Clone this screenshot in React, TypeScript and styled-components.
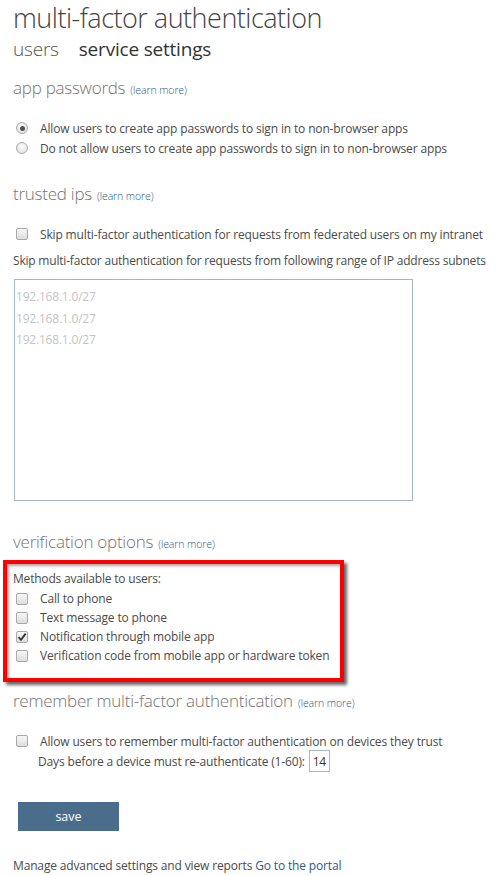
import React from "react";
import styled, { createGlobalStyle } from "styled-components";

const Global = createGlobalStyle`
  html, body { margin: 0; padding: 0; background: #fff; }
  body { font-family: "Open Sans", "Noto Sans", "Liberation Sans", sans-serif; color: #444; }
`;

const Page = styled.div`
  display: flex;
  flex-direction: column;
  padding: 0 0 0 13px;
  width: 485px;
`;

const Title = styled.h1`
  margin: 0;
  font-size: 27px;
  line-height: 36px;
  font-weight: 300;
  color: #444;
  letter-spacing: -0.5px;
`;

const Tabs = styled.div`
  display: flex;
  gap: 20px;
  margin-top: 0;
`;

const Tab = styled.span<{ $active?: boolean }>`
  font-size: 19px;
  line-height: 26px;
  font-weight: ${(p) => (p.$active ? 400 : 300)};
  color: ${(p) => (p.$active ? "#333" : "#555")};
  letter-spacing: -0.2px;
`;

const SectionHead = styled.h2<{ $top: number }>`
  margin: ${(p) => p.$top}px 0 0 0;
  font-size: 17px;
  line-height: 24px;
  font-weight: 300;
  color: #737373;
  letter-spacing: -0.25px;
`;

const Learn = styled.a`
  font-size: 10.5px;
  color: #2b5a8c;
  text-decoration: none;
  margin-left: 5px;
  letter-spacing: -0.1px;
`;

const Options = styled.div<{ $top: number; $gap?: number }>`
  display: flex;
  flex-direction: column;
  gap: ${(p) => p.$gap ?? 0}px;
  margin-top: ${(p) => p.$top}px;
`;

const Row = styled.label<{ $h?: number }>`
  display: flex;
  align-items: center;
  height: ${(p) => p.$h ?? 20}px;
  padding-left: 3px;
  font-size: 12px;
  color: #4a4a4a;
  letter-spacing: -0.15px;
`;

const Mark = styled.span`
  width: 24px;
  display: flex;
  align-items: center;
  flex: none;
`;

const RadioDot = styled.span<{ $on?: boolean }>`
  width: 12px;
  height: 12px;
  border-radius: 50%;
  border: 1px solid #a9a9a9;
  background: radial-gradient(circle at 50% 35%, #fdfdfd, #dcdcdc);
  display: flex;
  align-items: center;
  justify-content: center;
  box-sizing: border-box;
  &::after {
    content: "";
    display: ${(p) => (p.$on ? "block" : "none")};
    width: 5px;
    height: 5px;
    border-radius: 50%;
    background: #505050;
  }
`;

const Box = styled.span`
  width: 12px;
  height: 12px;
  border-radius: 2px;
  border: 1px solid #a8a8a8;
  background: linear-gradient(#f6f6f6, #dedede);
  box-sizing: border-box;
  display: flex;
  align-items: center;
  justify-content: center;
`;

const Plain = styled.div<{ $top: number }>`
  margin-top: ${(p) => p.$top}px;
  font-size: 12px;
  line-height: 20px;
  color: #4a4a4a;
  letter-spacing: -0.2px;
`;

const IpArea = styled.div`
  margin-top: 8px;
  margin-left: 1px;
  width: 399px;
  height: 222px;
  border: 1px solid #a3b5c8;
  box-sizing: border-box;
  padding: 6px 0 0 1px;
  display: flex;
  flex-direction: column;
`;

const IpLine = styled.div`
  font-size: 12px;
  line-height: 21.5px;
  color: #c4c4c4;
  letter-spacing: -0.2px;
`;

const Highlight = styled.div`
  margin: 4px 0 0 -10px;
  width: 341px;
  height: 122px;
  box-sizing: border-box;
  border: 4px solid #f00;
  box-shadow: 3px 3px 3px rgba(0, 0, 0, 0.6), inset 2px 2px 3px rgba(0, 0, 0, 0.35);
  padding: 5px 0 0 6px;
  display: flex;
  flex-direction: column;
`;

const HLRow = styled(Row)`
  padding-left: 3px;
`;

const Days = styled.div`
  display: flex;
  align-items: center;
  gap: 4px;
  margin: -1px 0 0 25px;
  font-size: 12px;
  color: #4a4a4a;
  letter-spacing: -0.15px;
  height: 22px;
`;

const DayInput = styled.span`
  width: 21px;
  height: 22px;
  box-sizing: border-box;
  border: 1px solid #a3b5c8;
  display: flex;
  align-items: center;
  justify-content: center;
  font-size: 12px;
  color: #333;
`;

const SaveButton = styled.button`
  margin: 30px 0 0 5px;
  width: 101px;
  height: 29px;
  background: #4a6d8c;
  color: #fff;
  border: none;
  font-family: inherit;
  font-size: 12.5px;
  padding: 0;
  align-self: flex-start;
`;

const Footer = styled.div`
  margin-top: 25px;
  font-size: 12px;
  line-height: 20px;
  color: #4a4a4a;
  letter-spacing: -0.15px;
`;

const FooterLink = styled.a`
  color: #2b5a8c;
  text-decoration: none;
`;

const Check = () => (
  <svg width="10" height="10" viewBox="0 0 10 10">
    <path d="M1.5 5.2 L4 7.8 L8.6 1.6" fill="none" stroke="#333" strokeWidth="1.8" />
  </svg>
);

const CheckBox = ({ on }: { on?: boolean }) => (
  <Mark>
    <Box>{on && <Check />}</Box>
  </Mark>
);

const Radio = ({ on }: { on?: boolean }) => (
  <Mark>
    <RadioDot $on={on} />
  </Mark>
);

export default function App() {
  return (
    <>
      <Global />
      <Page>
        <Title>multi-factor authentication</Title>
        <Tabs>
          <Tab>users</Tab>
          <Tab $active>service settings</Tab>
        </Tabs>

        <SectionHead $top={14}>
          app passwords<Learn>(learn more)</Learn>
        </SectionHead>
        <Options $top={16}>
          <Row>
            <Radio on />
            Allow users to create app passwords to sign in to non-browser apps
          </Row>
          <Row>
            <Radio />
            Do not allow users to create app passwords to sign in to non-browser apps
          </Row>
        </Options>

        <SectionHead $top={24}>
          trusted ips<Learn>(learn more)</Learn>
        </SectionHead>
        <Options $top={15}>
          <Row $h={22}>
            <CheckBox />
            Skip multi-factor authentication for requests from federated users on my intranet
          </Row>
        </Options>
        <Plain $top={6}>Skip multi-factor authentication for requests from following range of IP address subnets</Plain>
        <IpArea>
          <IpLine>192.168.1.0/27</IpLine>
          <IpLine>192.168.1.0/27</IpLine>
          <IpLine>192.168.1.0/27</IpLine>
        </IpArea>

        <SectionHead $top={29}>
          verification options<Learn>(learn more)</Learn>
        </SectionHead>
        <Highlight>
          <Plain $top={0}>Methods available to users:</Plain>
          <HLRow $h={19}>
            <CheckBox />
            Call to phone
          </HLRow>
          <HLRow $h={19}>
            <CheckBox />
            Text message to phone
          </HLRow>
          <HLRow $h={19}>
            <CheckBox on />
            Notification through mobile app
          </HLRow>
          <HLRow $h={19}>
            <CheckBox />
            Verification code from mobile app or hardware token
          </HLRow>
        </Highlight>

        <SectionHead $top={7}>
          remember multi-factor authentication<Learn>(learn more)</Learn>
        </SectionHead>
        <Options $top={16}>
          <Row>
            <CheckBox />
            Allow users to remember multi-factor authentication on devices they trust
          </Row>
        </Options>
        <Days>
          Days before a device must re-authenticate (1-60):
          <DayInput>14</DayInput>
        </Days>

        <SaveButton>save</SaveButton>
        <Footer>
          Manage advanced settings and view reports <FooterLink>Go to the portal</FooterLink>
        </Footer>
      </Page>
    </>
  );
}
